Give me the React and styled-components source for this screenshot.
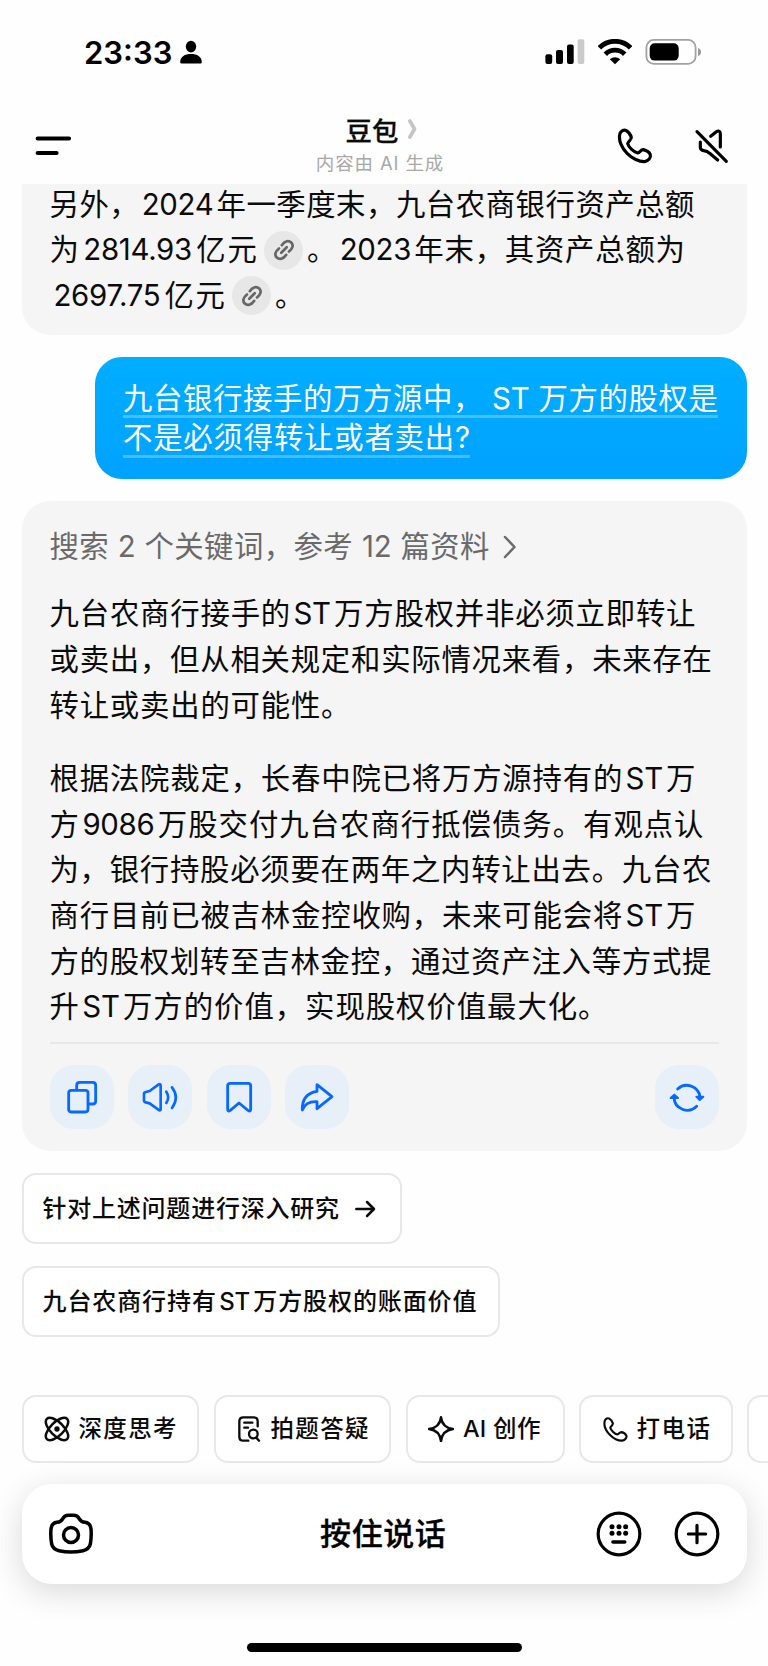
import React from "react";
import styled, { createGlobalStyle } from "styled-components";

const Global = createGlobalStyle`
  * { box-sizing: border-box; }
  body { margin: 0; background: #fefefe; }
`;

const Screen = styled.div`
  width: 768px;
  height: 1666px;
  overflow: hidden;
  display: flex;
  flex-direction: column;
  background: #fefefe;
  color: #0b0b0b;
  font-family: Inter, "Noto Sans CJK SC", sans-serif;
`;

const StatusBar = styled.header`
  display: flex;
  align-items: center;
  height: 104px;
  flex: none;
  padding: 0 66px 0 84px;
`;

const Clock = styled.div`
  font-size: 31px;
  font-weight: 600;
  line-height: 40px;
  width: 90px;
  padding-top: 1px;
  letter-spacing: 0;
  color: #000;
`;

const StatusIcons = styled.div`
  display: flex;
  align-items: center;
  margin-left: auto;
`;

const Icon = styled.svg`
  display: block;
  flex: none;
  fill: none;
  stroke: currentColor;
  stroke-linecap: round;
  stroke-linejoin: round;
  margin-left: ${(p) => p.$ml || 0}px;
`;

const NavBar = styled.nav`
  display: grid;
  grid-template-columns: 150px 1fr 150px;
  height: 80px;
  flex: none;
  padding: 0 37px 0 34px;
`;

const NavSide = styled.div`
  display: flex;
  padding-top: 22.5px;
  justify-content: ${(p) => (p.$end ? "flex-end" : "flex-start")};
  color: #000;
`;

const NavCenter = styled.div`
  display: flex;
  flex-direction: column;
  align-items: center;
`;

const Title = styled.h1`
  display: flex;
  align-items: center;
  margin: 7px 1px 0 0;
  height: 36px;
  font-size: 26.4px;
  font-weight: 500;
  -webkit-text-stroke: 0.3px currentColor;
`;

const Subtitle = styled.div`
  height: 30px;
  line-height: 30px;
  margin: 1px 5px 0 0;
  font-size: 18.5px;
  letter-spacing: 0.85px;
  color: #a8a8a8;
  white-space: nowrap;
`;

const Chat = styled.main`
  display: flex;
  flex-direction: column;
  flex: none;
  height: 1210.500px;
  padding: 0 21.500px;
`;

const Answer = styled.section`
  background: #f5f5f5;
  border-radius: ${(p) => (p.$cut ? "0 0 28px 28px" : "28px")};
  height: ${(p) => p.$h}px;
  padding: ${(p) => p.$pt}px 28px 0;
  flex: none;
`;

const Line = styled.div`
  display: flex;
  align-items: center;
  height: ${(p) => p.$h || 45.6}px;
  font-size: 29.4px;
  line-height: 40px;
  color: ${(p) => p.$color || "inherit"};
`;

const Run = styled.span`
  display: block;
  flex: none;
  width: ${(p) => p.$w}px;
  margin-left: ${(p) => p.$ml || 0}px;
  white-space: nowrap;
  text-align: justify;
  text-align-last: justify;
`;

const Latin = styled.span`
  display: inline-block;
  margin: 0 2.5px;
  letter-spacing: -0.3px;
`;

const Cite = styled.span`
  display: flex;
  align-items: center;
  justify-content: center;
  flex: none;
  width: 39px;
  height: 39px;
  margin-left: 7px;
  border-radius: 50%;
  background: #e7e7e7;
  color: #666;
`;

const Question = styled.section`
  align-self: flex-end;
  flex: none;
  width: 651.5px;
  height: 122px;
  margin: 21.5px 0 22px;
  padding: 22px 28px 0;
  border-radius: 27px;
  background: linear-gradient(#00aeff, #00a2ff);
`;

const QuestionLine = styled.div`
  width: ${(p) => p.$w}px;
  height: 39.5px;
  line-height: 39.500px;
  font-size: 29.4px;
  color: #fff;
  white-space: nowrap;
  text-align-last: justify;
  border-bottom: 3px solid rgba(255, 255, 255, 0.28);
`;

const Gap = styled.div`
  height: ${(p) => p.$h}px;
`;

const Divider = styled.hr`
  border: 0;
  height: 1.5px;
  margin: 12.500px 0 21px;
  background: #e8e8e8;
`;

const Actions = styled.div`
  display: flex;
  gap: 14.6px;
`;

const ActionButton = styled.button`
  display: flex;
  align-items: center;
  justify-content: center;
  width: 64px;
  height: 64px;
  padding: 0;
  border: 0;
  border-radius: 24px;
  background: #e7eff8;
  color: #0869ff;
  &:last-child { margin-left: auto; }
`;

const Suggestion = styled.button`
  display: flex;
  align-items: center;
  align-self: flex-start;
  flex: none;
  width: ${(p) => p.$w}px;
  height: 71px;
  margin-top: 22px;
  padding: 0 19px;
  border: 2px solid #e8e8e8;
  border-radius: 14px;
  background: #fff;
  color: #0b0b0b;
  font: 500 24px/34px Inter, "Noto Sans CJK SC", sans-serif;
`;

const Tools = styled.div`
  display: flex;
  flex: none;
  gap: 14.5px;
  height: 68px;
  padding-left: 21.5px;
`;

const Tool = styled.button`
  display: flex;
  align-items: center;
  flex: none;
  width: ${(p) => p.$w}px;
  height: 68px;
  padding: 1px 0 0 20.500px;
  border: 2px solid #e8e8e8;
  border-radius: 14px;
  background: #fff;
  color: #0b0b0b;
  font: 500 23.5px/34px Inter, "Noto Sans CJK SC", sans-serif;
`;

const Composer = styled.footer`
  display: grid;
  grid-template-columns: 150px 1fr 150px;
  align-items: center;
  flex: none;
  height: 100px;
  margin: 21.500px 21.5px 0;
  padding: 0 27px 0 25.500px;
  border-radius: 30px;
  background: #fff;
  box-shadow: 0 8px 32px rgba(0, 0, 0, 0.15);
  color: #000;
`;

const HoldToTalk = styled.div`
  text-align: center;
  font-size: 31px;
  font-weight: 500;
  line-height: 44px;
  letter-spacing: 0.6px;
  white-space: nowrap;
  -webkit-text-stroke: 0.3px currentColor;
`;

const ComposerEnd = styled.div`
  display: flex;
  justify-content: flex-end;
  gap: 32px;
`;

const HomeIndicator = styled.div`
  flex: none;
  width: 275px;
  height: 9.5px;
  margin: 58.5px auto 0;
  border-radius: 5px;
  background: #000;
`;

const PHONE =
  "M712 399C716 391 724 387 731 391C739 396 744 404 746 411C747 418 736 424 735 430C738 441 754 456 765 458C772 457 774 448 782 448C791 450 800 456 803 463C806 472 797 482 786 484C770 485 748 474 734 460C718 444 706 420 712 399Z";

const Phone = ({ size, stroke, ml }) => (
  <Icon $ml={ml} width={size} height={size} viewBox="700 380 112 112" strokeWidth={stroke}>
    <path d={PHONE} />
  </Icon>
);

const LinkCite = () => (
  <Cite>
    <Icon width="24" height="24" viewBox="0 0 24 24" strokeWidth="2.7">
      <path d="M9.800 7.200C10.800 5.600 12.800 3.700 14.800 3.200C18.200 2.500 21.300 5.500 20.500 8.800C20 10.800 18.500 12.300 17 13.500M14.200 16.800C13.200 18.400 11.200 20.300 9.200 20.800C5.800 21.500 2.700 18.500 3.500 15.200C4 13.200 5.500 11.700 7 10.500M9.300 14.700l5.400-5.400" />
    </Icon>
  </Cite>
);

const Text = ({ w, ml, h, color, children }) => (
  <Line $h={h} $color={color}>
    <Run $w={w} $ml={ml}>{children}</Run>
  </Line>
);

export default function App() {
  return (
    <Screen>
      <Global />
      <StatusBar>
        <Clock>23:33</Clock>
        <Icon $ml={5} width="24" height="26" viewBox="0 0 24 26">
          <g fill="#000" stroke="none">
            <ellipse cx="12" cy="7.6" rx="5.2" ry="5.8" />
            <path d="M1.2 23.2C1.2 17.6 6 15 12 15s10.800 2.600 10.800 8.200q0 1.300-1.400 1.300H2.600q-1.400 0-1.400-1.300Z" />
          </g>
        </Icon>
        <StatusIcons>
          <Icon width="40" height="26" viewBox="545 39 40 26">
            <g stroke="none" fill="#000">
              <rect x="545.400" y="54.300" width="6.800" height="9.700" rx="2" />
              <rect x="556" y="50" width="7" height="14" rx="2" />
              <rect x="567" y="44.500" width="6.700" height="19.500" rx="2" />
              <rect x="577.600" y="39.200" width="6.700" height="24.800" rx="2" fill="#cacaca" />
            </g>
          </Icon>
          <Icon $ml={13} width="34" height="26" viewBox="598 38 34 26" strokeWidth="4.900">
            <g stroke="#000" strokeLinecap="butt">
              <path d="M599.400 46.800a22 22 0 0 1 31.200 0" />
              <path d="M605.300 53.200a13.600 13.600 0 0 1 19.400 0" />
              <path d="M609.800 58.300a7.500 7.500 0 0 1 10.400 0L615 63.300Z" fill="#000" stroke="none" />
            </g>
          </Icon>
          <Icon $ml={13} width="57" height="28" viewBox="645 37.500 57 28">
            <rect x="646.400" y="39.400" width="49.200" height="24" rx="7.500" stroke="#a2a2a2" strokeWidth="1.800" />
            <rect x="649.700" y="42.800" width="29" height="17.300" rx="5" fill="#000" stroke="none" />
            <path d="M698 47.500q3 1 3 4t-3 4Z" fill="#999" stroke="none" />
          </Icon>
        </StatusIcons>
      </StatusBar>

      <NavBar>
        <NavSide>
          <Icon width="40" height="40" viewBox="34 126 40 40" strokeWidth="4.200">
            <path d="M37.700 137.500H69M37.700 152H56.500" />
          </Icon>
        </NavSide>
        <NavCenter>
          <Title>
            豆包
            <Icon $ml={9} width="11" height="22" viewBox="407 119 11 22" strokeWidth="3.600">
              <path d="M409.800 122L414.600 130L409.800 138.200" stroke="#c4c4c4" />
            </Icon>
          </Title>
          <Subtitle>内容由 AI 生成</Subtitle>
        </NavCenter>
        <NavSide $end>
          <Phone size={37.3} stroke={9.500} />
          <Icon $ml={39.500} width="38" height="38" viewBox="930 380 114 114" strokeWidth="9.500">
            <path d="M942 394L1030 483M983 408L1000 394Q1012 388 1012 401V440M952 425V442Q953 450 962 451Q973 452 980 459L1004 479" />
          </Icon>
        </NavSide>
      </NavBar>

      <Chat>
        <Answer $cut $h={151} $pt={0}>
          <Text h={41} w={645}>另外，<Latin>2024</Latin>年一季度末，九台农商银行资产总额</Text>
          <Line $h={50}>
            <Run $w={207.500}>为<Latin>2814.93</Latin>亿元</Run>
            <LinkCite />
            <Run $w={378} $ml={4}>。<Latin>2023</Latin>年末，其资产总额为</Run>
          </Line>
          <Line $h={41}>
            <Run $w={174} $ml={1.500}><Latin>2697.75</Latin>亿元</Run>
            <LinkCite />
            <Run $w={30} $ml={4}>。</Run>
          </Line>
        </Answer>

        <Question>
          <QuestionLine $w={595}>九台银行接手的万方源中， ST 万方的股权是</QuestionLine>
          <QuestionLine $w={347}>不是必须得转让或者卖出?</QuestionLine>
        </Question>

        <Answer $h={650.500} $pt={23.500}>
          <Line $color="#6a6a6a">
            <Run $w={440}>搜索 2 个关键词，参考 12 篇资料</Run>
            <Icon $ml={12} width="16" height="26" viewBox="0 0 16 26" strokeWidth="2.500">
              <path d="M3 3l9.500 10L3 23" />
            </Icon>
          </Line>
          <Gap $h={22} />
          <Text w={646}>九台农商行接手的<Latin>ST</Latin>万方股权并非必须立即转让</Text>
          <Text w={662.500}>或卖出，但从相关规定和实际情况来看，未来存在</Text>
          <Text w={301}>转让或卖出的可能性。</Text>
          <Gap $h={28} />
          <Text w={646}>根据法院裁定，长春中院已将万方源持有的<Latin>ST</Latin>万</Text>
          <Text w={654}>方<Latin>9086</Latin>万股交付九台农商行抵偿债务。有观点认</Text>
          <Text w={662}>为，银行持股必须要在两年之内转让出去。九台农</Text>
          <Text w={646}>商行目前已被吉林金控收购，未来可能会将<Latin>ST</Latin>万</Text>
          <Text w={662}>方的股权划转至吉林金控，通过资产注入等方式提</Text>
          <Text w={558}>升<Latin>ST</Latin>万方的价值，实现股权价值最大化。</Text>
          <Divider />
          <Actions>
            <ActionButton aria-label="copy">
              <Icon width="40" height="40" viewBox="186 142 120 120" strokeWidth="8.500">
                <rect x="206" y="182" width="58" height="65" rx="8" />
                <path d="M230 179V167Q230 158 239 158H278Q287 158 287 167V214Q287 223 278 223H268" />
              </Icon>
            </ActionButton>
            <ActionButton aria-label="speak">
              <Icon width="40" height="40" viewBox="422 142 120 120" strokeWidth="8">
                <path d="M434 193Q434 188 439 187L451 184L477 165Q484 161 484 168V238Q484 245 477 240L451 221L439 218Q434 217 434 212Z" />
                <path d="M501 186Q512 203 501 220M518 173Q541 203 518 235" />
              </Icon>
            </ActionButton>
            <ActionButton aria-label="save">
              <Icon width="40" height="40" viewBox="657 142 120 120" strokeWidth="8.500">
                <path d="M683 168Q683 161 691 161H744Q752 161 752 168V239Q752 247 744 242L717 220L691 242Q683 247 683 239Z" />
              </Icon>
            </ActionButton>
            <ActionButton aria-label="share">
              <Icon width="40" height="40" viewBox="893 142 120 120" strokeWidth="8.500">
                <path d="M953 165L998 201L953 237V216Q920 214 909 241Q907 192 953 185Z" />
              </Icon>
            </ActionButton>
            <ActionButton aria-label="refresh">
              <Icon width="40" height="40" viewBox="846 142 120 120" strokeWidth="8.500">
                <path d="M878 178A40 40 0 0 1 945 202M867 203A40 40 0 0 0 935 230" />
                <path d="M934 201H955L944 211ZM857 205H879L868 195Z" fill="currentColor" strokeWidth="6" />
              </Icon>
            </ActionButton>
          </Actions>
        </Answer>

        <Suggestion $w={380}>
          <Run $w={296.500}>针对上述问题进行深入研究</Run>
          <Icon $ml={15} width="22" height="20" viewBox="1066 506 66 60" strokeWidth="7.500">
            <path d="M1073 536H1125M1105 515L1126 536L1105 557" />
          </Icon>
        </Suggestion>
        <Suggestion $w={478.500}>
          <Run $w={434}>九台农商行持有<Latin>ST</Latin>万方股权的账面价值</Run>
        </Suggestion>
      </Chat>

      <Tools>
        <Tool $w={177.500}>
          <Icon width="26" height="26" viewBox="132 106 78 78" strokeWidth="7.500">
            <ellipse cx="171" cy="145" rx="43" ry="20" transform="rotate(45 171 145)" />
            <ellipse cx="171" cy="145" rx="43" ry="20" transform="rotate(-45 171 145)" />
            <circle cx="171" cy="145" r="8" fill="currentColor" stroke="none" />
          </Icon>
          <Run $w={98} $ml={8.500}>深度思考</Run>
        </Tool>
        <Tool $w={177.500}>
          <Icon width="26" height="26" viewBox="711 106 78 78" strokeWidth="7">
            <path d="M748 180H733Q721 180 721 168V122Q721 110 733 110H764Q776 110 776 122V137M736 126H760M736 141H747M773 172L780 180" />
            <circle cx="763" cy="160" r="13" />
          </Icon>
          <Run $w={98} $ml={8.500}>拍题答疑</Run>
        </Tool>
        <Tool $w={159}>
          <Icon width="26" height="26" viewBox="135 106 78 78" strokeWidth="7.500">
            <path d="M174 110Q178 141 210 145Q178 149 174 181Q170 149 138 145Q170 141 174 110Z" />
          </Icon>
          <Run $w={77.500} $ml={9}>AI 创作</Run>
        </Tool>
        <Tool $w={153.500}>
          <Phone size={26.500} stroke={9} />
          <Run $w={73.500} $ml={8.500}>打电话</Run>
        </Tool>
        <Tool $w={150} />
      </Tools>

      <Composer>
        <Icon width="48" height="48" viewBox="142 390 144 144" strokeWidth="10.500">
          <path d="M154 447Q156 429 172 427Q184 426 190 415Q195 406 206 406H222Q233 406 238 415Q244 426 256 427Q272 429 274 447Q276 470 272 492Q268 508 250 512Q214 520 178 512Q160 508 156 492Q152 470 154 447Z" />
          <circle cx="214" cy="465" r="22.500" />
        </Icon>
        <HoldToTalk>按住说话</HoldToTalk>
        <ComposerEnd>
          <Icon width="46" height="46" viewBox="634 393 138 138" strokeWidth="9.500">
            <circle cx="703" cy="462" r="62.500" />
            <g fill="currentColor" stroke="none">
              <circle cx="682" cy="440" r="7.500" />
              <circle cx="703" cy="440" r="7.500" />
              <circle cx="723" cy="440" r="7.500" />
              <circle cx="682" cy="460" r="7.500" />
              <circle cx="703" cy="460" r="7.500" />
              <circle cx="723" cy="460" r="7.500" />
            </g>
            <path d="M685 486H720" strokeWidth="11" />
          </Icon>
          <Icon width="46" height="46" viewBox="869 393 138 138" strokeWidth="9.500">
            <circle cx="938" cy="462" r="62.500" />
            <path d="M912 462H964M938 436V488" />
          </Icon>
        </ComposerEnd>
      </Composer>
      <HomeIndicator />
    </Screen>
  );
}
